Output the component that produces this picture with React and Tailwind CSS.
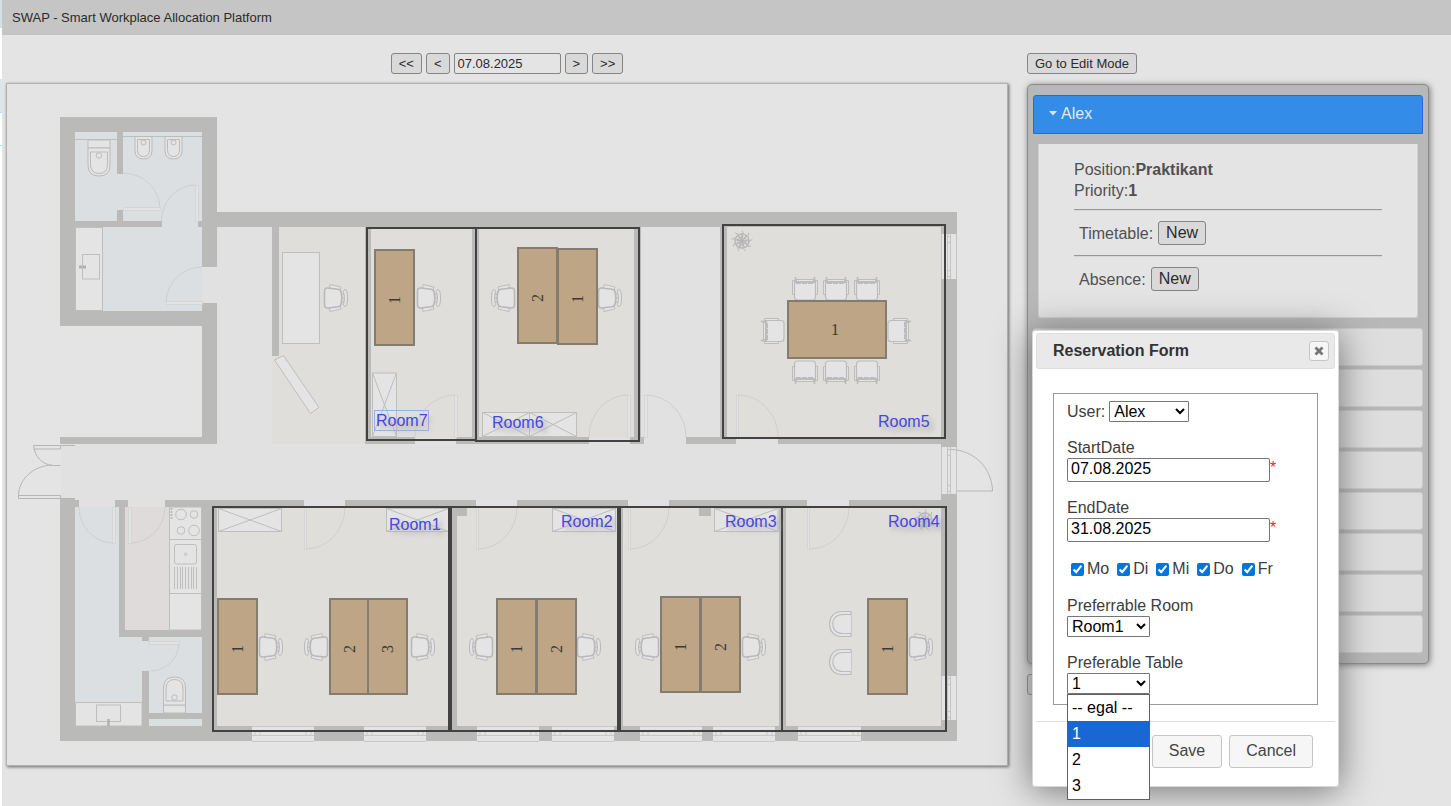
import { useState } from "react";

const WALL = "#babab8";
const LINE = "#bebebd";
const FLOOR = "#dfdeda";
const WET = "#dbdfe2";
const BASE = "#e4e4e4";
const HALL = "#e1e1e1";

function R({ x1, y1, x2, y2, ...rest }) {
  return <rect x={x1} y={y1} width={x2 - x1} height={y2 - y1} {...rest} />;
}

const floors = [
  [217, 227, 941, 444, HALL],
  [61, 444, 941, 507, HALL],
  [201, 267, 217, 303, HALL],
  [75, 132, 117, 221, WET],
  [117, 132, 202, 227, WET],
  [75, 227, 202, 311, WET],
  [272, 356, 366, 444, FLOOR],
  [279, 227, 366, 356, FLOOR],
  [371, 227, 472, 438, FLOOR],
  [479, 227, 634, 438, FLOOR],
  [727, 227, 941, 438, FLOOR],
  [217, 507, 449, 727, FLOOR],
  [457, 507, 617, 727, FLOOR],
  [623, 507, 779, 727, FLOOR],
  [786, 507, 941, 727, FLOOR],
  [75, 507, 142, 726, WET],
  [149, 637, 202, 726, WET],
  [142, 640, 150, 671, WET],
  [125, 507, 169, 630, "#dfdbda"],
];

const walls = [
  [60, 117, 217, 132],
  [60, 117, 75, 326],
  [60, 311, 217, 326],
  [202, 117, 217, 267],
  [202, 303, 217, 444],
  [60, 437, 217, 444],
  [117, 132, 123, 174],
  [117, 210, 123, 221],
  [75, 221, 162, 227],
  [198, 221, 202, 227],
  [217, 212, 957, 227],
  [272, 227, 279, 356],
  [365, 227, 371, 440],
  [472, 227, 479, 440],
  [634, 227, 641, 440],
  [720, 227, 727, 440],
  [941, 212, 957, 741],
  [365, 437, 415, 444],
  [456, 437, 589, 444],
  [630, 437, 644, 444],
  [686, 437, 736, 444],
  [778, 437, 941, 444],
  [60, 498, 75, 741],
  [60, 500, 79, 507],
  [115, 500, 128, 507],
  [165, 500, 304, 507],
  [345, 500, 476, 507],
  [517, 500, 628, 507],
  [669, 500, 807, 507],
  [849, 500, 941, 507],
  [60, 726, 957, 741],
  [119, 507, 125, 637],
  [119, 630, 217, 637],
  [202, 507, 217, 741],
  [142, 637, 149, 641],
  [142, 671, 149, 726],
  [149, 713, 202, 719],
  [449, 507, 457, 727],
  [617, 507, 623, 727],
  [779, 507, 786, 727],
  [457, 507, 467, 516],
  [699, 507, 711, 516],
];

function Cabinet({ x1, y1, x2, y2 }) {
  return (
    <g fill="#e4e4e4" stroke={LINE}>
      <R x1={x1} y1={y1} x2={x2} y2={y2} />
      <path d={`M${x1} ${y1}L${x2} ${y2}M${x1} ${y2}L${x2} ${y1}`} />
    </g>
  );
}

function OfficeChair({ x, y, flip }) {
  return (
    <g transform={`translate(${x} ${y}) scale(${flip ? -1 : 1} 1)`} fill="#e4e4e4" stroke="#b9b9b9">
      <path d="M5.500 -10L6 -13.500L17 -11L16 -8Z M5.500 10L6 13.500L17 11L16 8Z" strokeWidth="0.900" />
      <path d="M17 -4H20M17 0H20M17 4H20" />
      <path d="M20.500 -8.500Q23.500 -9 23.500 0Q23.500 9 20.500 8.500Q18.800 7 20 4Q21 0 20 -4Q18.800 -7 20.500 -8.500Z" />
      <path d="M3.500 -10L14 -8.800Q17 -8.300 17.300 -5Q18.400 0 17.300 5Q17 8.300 14 8.800L3.500 10Q0.800 10.200 0.500 7V-7Q0.800 -10.200 3.500 -10Z" strokeWidth="1.600" />
    </g>
  );
}

function MeetingChair({ t }) {
  return (
    <g transform={t} fill="#e4e4e4" stroke="#bcbcbc">
      <path d="M-10.500 -19.500H-12.500V-5.500H-10.500M10.500 -19.500H12.500V-5.500H10.500" />
      <path d="M-9 -20.500H9L11 -18.500H-11Z" />
      <path d="M-11 -20L-8 -19.500M-10 -23L-8.500 -20M11 -20L8 -19.500M10 -23L8.500 -20" strokeWidth="1.500" />
      <path d="M-10.500 -17.500H10.500V-3Q10.500 0 7.500 0H-7.500Q-10.500 0 -10.500 -3Z" strokeWidth="1.200" />
      <path d="M-9 -16.500H9" strokeDasharray="5 1" />
    </g>
  );
}

function ArmChair({ x, y }) {
  return (
    <g fill="#e4e4e4" stroke="#bcbcbc" strokeWidth="1.200">
      <path d={`M${x + 21.5} ${y}H${x + 12}C${x - 4} ${y} ${x - 4} ${y + 25} ${x + 12} ${y + 25}H${x + 21.5}Z`} />
      <path d={`M${x + 21.5} ${y + 3}H${x + 13}C${x} ${y + 3} ${x} ${y + 22} ${x + 13} ${y + 22}H${x + 21.5}`} />
    </g>
  );
}

function Plant({ x, y }) {
  const leaves = [0, 40, 80, 120, 160, 200, 240, 280, 320];
  return (
    <g transform={`translate(${x} ${y})`} fill="none" stroke="#b4b4b4">
      <circle r="7" strokeDasharray="4 1" strokeWidth="1.300" />
      <circle r="4" strokeDasharray="3 1" />
      {leaves.map((a) => (
        <path key={a} transform={`rotate(${a})`} d="M0 0L1 -7M0 0L4 -5M2 -6.500L0 -10.500" strokeWidth="0.900" />
      ))}
    </g>
  );
}

function Toilet({ t }) {
  return (
    <g transform={t} fill="#e4e4e4" stroke="#bbbbbb">
      <path d="M-11 0H11V8H-11Z" />
      <path d="M-11 8H11V25Q11 36 0 36Q-11 36 -11 25Z" />
      <path d="M-8.500 12H8.500V24Q8.500 33.500 0 33.500Q-8.500 33.500 -8.500 24Z" />
      <circle cy="15.500" r="2.700" />
    </g>
  );
}

function Bidet({ x, y }) {
  return (
    <g transform={`translate(${x} ${y})`} fill="#e4e4e4" stroke="#bbbbbb">
      <path d="M-8.500 0H8.500V14Q8.500 22.500 0 22.500Q-8.500 22.500 -8.500 14Z" />
      <path d="M-6 3H6V13Q6 20 0 20Q-6 20 -6 13Z" />
      <circle cy="6" r="2.500" />
    </g>
  );
}

const doorLeaves = [
  [123, 207, 160, 210],
  [195, 185, 198, 221],
  [166, 301, 202, 304],
  [454, 395, 457, 437],
  [627, 395, 630, 437],
  [644, 395, 647, 437],
  [736, 395, 738, 437],
  [304, 507, 306, 549],
  [476, 507, 478, 549],
  [628, 507, 630, 549],
  [807, 507, 809, 549],
  [112, 507, 115, 543],
  [128, 507, 131, 543],
  [149, 641, 179, 644],
];

const doorArcs =
  "M123 173A37 36 0 0 1 160 209M195 185A34 36 0 0 0 161.500 221M202 267A36 36 0 0 0 166 302" +
  "M455 395A40 42 0 0 0 415 437M628 395A39 42 0 0 0 589 437M646 395A40 42 0 0 1 686 437M738 395A40 42 0 0 1 778 437" +
  "M306 549A39 42 0 0 0 345 507M478 549A39 42 0 0 0 517 507M630 549A39 42 0 0 0 669 507M809 549A39 42 0 0 0 849 507" +
  "M79 507A34 36 0 0 0 113 543M130 543A35 36 0 0 0 165 507M179 644A29 28 0 0 1 150 671";

const windowsBottom = [[252, 314], [364, 426], [477, 539], [552, 614], [640, 702], [713, 775], [798, 861]];
const windowsRight = [[234, 279], [447, 494], [676, 720]];

const rooms = [
  { x: 213, y: 507, w: 237, h: 224, name: "Room1", tx: 389, ty: 530 },
  { x: 451, y: 507, w: 168, h: 224, name: "Room2", tx: 561, ty: 527 },
  { x: 620, y: 507, w: 162, h: 224, name: "Room3", tx: 725, ty: 527 },
  { x: 782, y: 507, w: 164, h: 224, name: "Room4", tx: 888, ty: 527 },
  { x: 723, y: 225, w: 222, h: 213, name: "Room5", tx: 878, ty: 427 },
  { x: 476, y: 228, w: 163, h: 213, name: "Room6", tx: 492, ty: 428 },
  { x: 367, y: 228, w: 109, h: 212, name: "Room7", tx: 376, ty: 426 },
];

const desks = [
  { x: 375, y: 250, n: 1 },
  { x: 518, y: 248, n: 2 },
  { x: 558, y: 249, n: 1 },
  { x: 218, y: 599, n: 1 },
  { x: 330, y: 599, n: 2 },
  { x: 368, y: 599, n: 3 },
  { x: 497, y: 599, n: 1 },
  { x: 537, y: 599, n: 2 },
  { x: 661, y: 597, n: 1 },
  { x: 701, y: 597, n: 2 },
  { x: 868, y: 599, n: 1 },
];

function FloorPlan() {
  return (
    <svg viewBox="7 84 1000 681" className="block w-full" role="img" aria-label="Floor plan">
      {floors.map(([x1, y1, x2, y2, c], i) => (
        <R key={i} x1={x1} y1={y1} x2={x2} y2={y2} fill={c} />
      ))}
      {walls.map(([x1, y1, x2, y2], i) => (
        <R key={i} x1={x1} y1={y1} x2={x2} y2={y2} fill={WALL} />
      ))}

      {windowsBottom.map(([a, b]) => (
        <g key={a}>
          <R x1={a} y1={726} x2={b} y2={742} fill={BASE} />
          <path d={`M${a} 726.500H${b}M${a} 735.500H${b}M${a} 741.500H${b}M${a + 3} 731V735M${a + 8} 731V735M${b - 3} 731V735M${b - 8} 731V735`} stroke="#c8c8c8" />
        </g>
      ))}
      {windowsRight.map(([a, b]) => (
        <g key={a}>
          <R x1={941} y1={a} x2={957} y2={b} fill={BASE} />
          <path d={`M941.500 ${a}V${b}M947.500 ${a}V${b}M950.500 ${a}V${b}M956.500 ${a}V${b}M947 ${a + 2.5}H951M947 ${a + 8.5}H951M947 ${b - 2.5}H951M947 ${b - 8.5}H951`} stroke="#c4c4c4" fill="none" />
        </g>
      ))}

      <path d={doorArcs} fill="none" stroke="#cfcfcd" />
      {doorLeaves.map(([x1, y1, x2, y2], i) => (
        <R key={i} x1={x1 + 0.5} y1={y1 + 0.5} x2={x2 + 0.5} y2={y2 + 0.5} fill="#e3e3e3" stroke="#d3d3d1" strokeWidth="0.800" />
      ))}

      <g fill="none" stroke="#b6b6b6">
        <path d="M60.500 445.500H33.500C35 457 42 464 52 465.500H60.500M33.500 449H60.500M60.500 445V449M52 465C32 466 19 480 18.500 495V498.500H60.500V495.500H18.500" />
        <path d="M60 445.500H75M60 498.500H75" />
        <path d="M951 449.500C974 450 992 468 992.500 491H957" />
      </g>

      <g fill="#e4e4e4" stroke={LINE}>
        <path d="M75 139.500H117M123 136.500H202" />
        <R x1={75.5} y1={227.5} x2={102.5} y2={310.5} />
        <R x1={82.5} y1={254.5} x2={99.5} y2={279} />
        <path d="M79 267H86" stroke="#b0b0b0" strokeWidth="3" strokeDasharray="3 1" />
        <R x1={75.5} y1={702.5} x2={142} y2={726} />
        <R x1={96.5} y1={705} x2={120.5} y2={721.5} />
        <path d="M108.500 719V726" stroke="#b0b0b0" strokeWidth="2.500" />
        <R x1={169.5} y1={507} x2={201.5} y2={630} />
        <path d="M169.500 539.500H201.500M169.500 593.500H201.500" />
        <circle cx="181" cy="514.500" r="5.300" />
        <circle cx="194" cy="514.500" r="3.800" />
        <circle cx="181" cy="530.500" r="3.800" />
        <circle cx="194" cy="530.500" r="5.300" />
        <path d="M171.500 508V519" strokeWidth="2" strokeDasharray="2 1" />
        <rect x="174.500" y="544.500" width="22" height="19.500" rx="2" />
        <circle cx="185.700" cy="554.300" r="1.300" />
        <path d="M174.500 567V589M177.500 567V589M180.500 567V589M182.500 567V589M185.500 567V589M188.500 567V589M191.500 567V589M193.500 567V589M196.500 567V589" />
        <R x1={282.5} y1={252.5} x2={319.5} y2={343.5} />
        <path d="M274.500 360L283.500 355.500L319 407.500L310.500 413.500Z" />
      </g>
      <Toilet t="translate(99 140)" />
      <Toilet t="translate(174.500 713) scale(1 -1)" />
      <Bidet x={143.5} y={136.5} />
      <Bidet x={173.5} y={136.5} />

      <Cabinet x1={218.5} y1={508.5} x2={281.5} y2={531.5} />
      <Cabinet x1={386.5} y1={508.5} x2={448.5} y2={531.5} />
      <Cabinet x1={552.5} y1={508.5} x2={615.5} y2={531.5} />
      <Cabinet x1={714.5} y1={508.5} x2={778} y2={531.5} />
      <Cabinet x1={482.5} y1={412.5} x2={529.5} y2={436.5} />
      <Cabinet x1={529.5} y1={412.5} x2={576.5} y2={436.5} />
      <Cabinet x1={372.5} y1={373} x2={396.5} y2={436.5} />

      <OfficeChair x={324} y={298} />
      <OfficeChair x={417} y={298} />
      <OfficeChair x={598} y={298} />
      <OfficeChair x={515} y={298} flip />
      <OfficeChair x={259} y={647} />
      <OfficeChair x={328} y={647} flip />
      <OfficeChair x={411} y={647} />
      <OfficeChair x={493} y={647} flip />
      <OfficeChair x={577} y={647} />
      <OfficeChair x={659} y={647} flip />
      <OfficeChair x={742} y={647} />
      <OfficeChair x={909} y={647} />
      {[805, 836, 867].map((x) => (
        <g key={x}>
          <MeetingChair t={`translate(${x} 300)`} />
          <MeetingChair t={`translate(${x} 361) scale(1 -1)`} />
        </g>
      ))}
      <MeetingChair t="translate(784 331) rotate(-90)" />
      <MeetingChair t="translate(888 331) rotate(90)" />
      <ArmChair x={829.5} y={611.5} />
      <ArmChair x={829.5} y={649.5} />
      <Plant x={742} y={241} />
      <Plant x={925} y={520} />

      <g fill="none" stroke="#424240" strokeWidth="2">
        {rooms.map((r) => (
          <rect key={r.name} x={r.x} y={r.y} width={r.w} height={r.h} />
        ))}
      </g>
      <path d="M450 506V732M619 506V732" stroke="#424240" strokeWidth="4" />

      <g fill="#bea586" stroke="#857c70" strokeWidth="2">
        {desks.map((d) => (
          <rect key={`${d.x}-${d.y}`} x={d.x} y={d.y} width={39} height={95} />
        ))}
        <rect x="788" y="301" width="98" height="57" />
      </g>
      <g className="font-['Liberation_Serif',serif] text-[16px]" fill="#3a3a3a" textAnchor="middle">
        {desks.map((d) => (
          <text key={`${d.x}-${d.y}`} transform={`translate(${d.x + 25} ${d.y + 50}) rotate(-90)`}>
            {d.n}
          </text>
        ))}
        <text x="835" y="335">1</text>
      </g>

      <rect x="374.500" y="410.500" width="54" height="20" fill="none" stroke="#94b2e0" />
      <g className="text-[16px] [text-shadow:4px_4px_5px_#aaaaaa]" fill="#4646e4">
        {rooms.map((r) => (
          <text key={r.name} x={r.tx} y={r.ty}>
            {r.name}
          </text>
        ))}
      </g>
    </svg>
  );
}

const grayButton = "rounded-[3px] border border-[#858585] bg-[#d9d9d9] text-[#2b2b2b]";

function Toolbar() {
  const small = `${grayButton} h-[21px] px-[7px] text-[13px] leading-none`;
  return (
    <div className="flex justify-center gap-1">
      <button className={small}>&lt;&lt;</button>
      <button className={small}>&lt;</button>
      <input
        aria-label="Date"
        defaultValue="07.08.2025"
        className="h-[21px] w-[107px] rounded-[2px] border border-[#858585] bg-[#e4e4e4] px-[3px] text-[13px] text-[#2b2b2b]"
      />
      <button className={small}>&gt;</button>
      <button className={small}>&gt;&gt;</button>
    </div>
  );
}

function EntryRow({ label }) {
  return (
    <div className="my-[10px] flex items-center gap-[5px] pl-[5px]">
      <span>{label}</span>
      <button className={`${grayButton} h-6 w-12 text-[16px] leading-none`}>New</button>
    </div>
  );
}

function UserPanel() {
  return (
    <section className="flex flex-col gap-[3px] rounded-[5px] border border-[#8a8a8a] bg-[#b8b8b8] px-[5px] pt-[10px] pb-[10px] shadow-[1px_1px_6px_#777]">
      <button className="flex h-[39px] items-center rounded-t-[3px] border border-[#2f66e0] bg-[#338de8] pb-[2px] pl-[15px] text-[16px] text-[#e6e6e6]">
        <svg viewBox="0 0 8 5" className="mr-1 w-2" aria-hidden="true">
          <path d="M0 0H8L4 4.500Z" fill="#e6e6e6" />
        </svg>
        Alex
      </button>
      <div className="mx-[5px] mt-[7px] mb-[7px] rounded-b-[3px] border border-t-0 border-[#cfcfcf] bg-[#e4e4e4] px-[35px] pt-[15px] pb-4 text-[16px] leading-[21px] text-[#505050]">
        <p>
          Position:<b>Praktikant</b>
        </p>
        <p>
          Priority:<b>1</b>
        </p>
        <hr className="mt-2 border-t border-b border-t-[#979797] border-b-[#d8d8d8]" />
        <EntryRow label="Timetable:" />
        <hr className="border-t border-b border-t-[#979797] border-b-[#d8d8d8]" />
        <EntryRow label="Absence:" />
      </div>
      {[2, 3, 4, 5, 6, 7, 8, 9].map((n) => (
        <button key={n} aria-label={`User ${n}`} className="h-[38px] rounded-[3px] border border-[#cbcbcb] bg-[#dedede]" />
      ))}
    </section>
  );
}

const fieldInput = "h-6 w-[203px] rounded-[2px] border border-[#767676] bg-white px-[3px] pb-[2px] text-[16px] leading-none text-black";
const selectBox = "block h-[21px] rounded-[1px] border border-[#767676] bg-white text-[16px] leading-none text-black";

function DateField({ id, label, value }) {
  return (
    <div>
      <label htmlFor={id} className="block">
        {label}
      </label>
      <div className="flex">
        <input id={id} defaultValue={value} className={fieldInput} />
        <span className="text-[16px] leading-5 text-[#ff1a1a]">*</span>
      </div>
    </div>
  );
}

function ReservationDialog() {
  const [table, setTable] = useState("1");
  const options = ["-- egal --", "1", "2", "3"];
  const dialogButton = "h-[33px] rounded-[3px] border border-[#c5c5c5] bg-[#f6f6f6] px-4 pb-[2px] text-[16px] leading-none text-[#454545]";
  return (
    <div
      role="dialog"
      aria-labelledby="dialog-title"
      className="absolute top-[330px] right-[112px] w-[307px] rounded-[3px] border border-[#d8d8d8] bg-white px-[3px] pt-[2px] pb-[3px] text-[16px] leading-5 text-[#3d3d3d] shadow-[0_3px_36px_#707070]"
    >
      <header className="flex h-9 items-center justify-between rounded-[3px] border border-[#dddddd] bg-[#e9e9e9] pr-[5px] pl-4">
        <h2 id="dialog-title" className="text-[16px] font-bold text-[#333333]">
          Reservation Form
        </h2>
        <button aria-label="Close" className="flex size-5 items-center justify-center rounded-[3px] border border-[#c5c5c5] bg-[#f6f6f6]">
          <svg viewBox="0 0 10 10" className="size-[10px]" aria-hidden="true">
            <path d="M1.500 1.500L8.500 8.500M8.500 1.500L1.500 8.500" stroke="#777777" strokeWidth="2.800" />
          </svg>
        </button>
      </header>
      <form className="px-[17px] pt-6">
        <fieldset className="flex flex-col gap-4 border border-[#9a9a9a] px-[13px] pt-[7px] pb-[10px]">
          <div className="flex items-center gap-1">
            <label htmlFor="user">User:</label>
            <select id="user" defaultValue="Alex" className={`${selectBox} w-20`}>
              <option>Alex</option>
            </select>
          </div>
          <DateField id="start" label="StartDate" value="07.08.2025" />
          <DateField id="end" label="EndDate" value="31.08.2025" />
          <div className="flex h-[22px] items-center gap-2 pl-1">
            {["Mo", "Di", "Mi", "Do", "Fr"].map((d) => (
              <label key={d} className="flex items-center gap-[3px]">
                <input type="checkbox" defaultChecked className="size-[13px] accent-[#0075dd]" />
                {d}
              </label>
            ))}
          </div>
          <div>
            <label htmlFor="room" className="block">
              Preferrable Room
            </label>
            <select id="room" defaultValue="Room1" className={`${selectBox} w-[83px]`}>
              <option>Room1</option>
            </select>
          </div>
          <div className="relative">
            <label htmlFor="table" className="block">
              Preferable Table
            </label>
            <select id="table" value={table} onChange={(e) => setTable(e.target.value)} className={`${selectBox} w-[83px]`}>
              {options.map((o) => (
                <option key={o}>{o}</option>
              ))}
            </select>
            <ul role="listbox" aria-label="Preferable Table" className="absolute top-full left-0 z-10 w-[83px] border border-[#606060] bg-white text-black">
              {options.map((o) => (
                <li
                  key={o}
                  role="option"
                  aria-selected={o === table}
                  onClick={() => setTable(o)}
                  className={o === table ? "bg-[#1967d2] pl-1 leading-[26px] text-white" : "pl-1 leading-[26px]"}
                >
                  {o}
                </li>
              ))}
            </ul>
          </div>
        </fieldset>
      </form>
      <footer className="mt-4 flex justify-end gap-[7px] border-t border-[#dddddd] pt-[13px] pr-[22px] pb-[15px]">
        <button className={dialogButton}>Save</button>
        <button className={dialogButton}>Cancel</button>
      </footer>
    </div>
  );
}

export default function App() {
  return (
    <div className="relative flex min-h-screen overflow-hidden bg-[#e4e4e4] font-['Liberation_Sans',Arial,sans-serif]">
      <div className="flex w-[2px] flex-col bg-white">
        <span className="h-7 bg-[#cfe3e6]" />
        <span className="mt-[51px] h-[34px] border-b border-[#8ff0f8] bg-[#d5e8ea]" />
        <span className="h-[33px] border-b border-[#8ff0f8]" />
      </div>
      <div className="min-w-0 flex-1">
        <header className="flex h-[35px] items-center bg-[#c5c5c5] pl-[10px] text-[13px] text-[#2b2b2b]">
          <h1>SWAP - Smart Workplace Allocation Platform</h1>
        </header>
        <main className="flex gap-[19px] pt-[18px] pr-[22px] pl-1">
          <section className="flex min-w-0 flex-1 flex-col gap-[9px]">
            <Toolbar />
            <div className="border border-[#b0b0b0] shadow-[1px_1px_3px_#666]">
              <FloorPlan />
            </div>
          </section>
          <aside className="flex w-[402px] flex-col gap-[10px]">
            <button className={`${grayButton} h-[21px] self-start px-[7px] text-[13px] leading-none`}>Go to Edit Mode</button>
            <UserPanel />
            <button className={`${grayButton} h-[21px] self-start px-[7px] text-[13px] leading-none`}>New User</button>
          </aside>
        </main>
      </div>
      <ReservationDialog />
    </div>
  );
}
